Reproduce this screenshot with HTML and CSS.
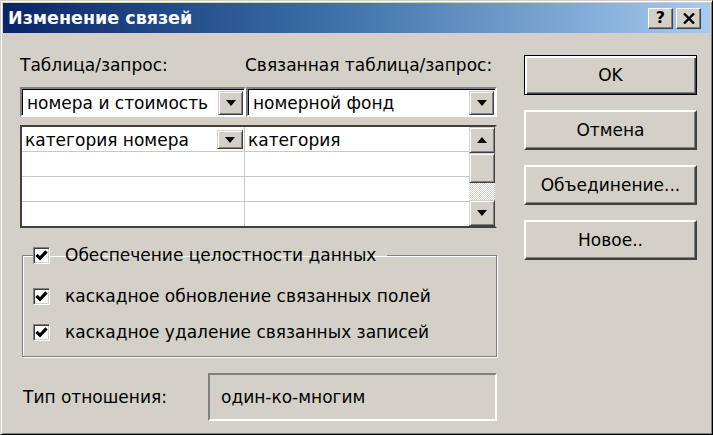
FILE: index.html
```html
<!DOCTYPE html>
<html lang="ru">
<head>
<meta charset="utf-8">
<title>Изменение связей</title>
<link rel="stylesheet" href="styles.css">
</head>
<body>
<div class="window">
  <div class="titlebar">
    <span class="title">Изменение связей</span>
    <div class="tb-buttons">
      <div class="tb-btn help">?</div>
      <div class="tb-btn close">
        <svg width="12" height="11" viewBox="0 0 12 11"><path d="M1 0.5 L11 10.5 M11 0.5 L1 10.5" stroke="#000" stroke-width="2.4" fill="none"/></svg>
      </div>
    </div>
  </div>
  <div class="body">
    <div class="left">
      <div class="labels">
        <span class="lab-l">Таблица/запрос:</span>
        <span class="lab-r">Связанная таблица/запрос:</span>
      </div>
      <div class="combos">
        <div class="combo c1"><span class="val">номера и стоимость</span><span class="drop"><i class="arr-down"></i></span></div>
        <div class="combo c2"><span class="val">номерной фонд</span><span class="drop"><i class="arr-down"></i></span></div>
      </div>
      <div class="grid">
        <div class="cells">
          <div class="row first">
            <div class="cell cl">категория номера<span class="drop small"><i class="arr-down"></i></span></div>
            <div class="cell cr">категория</div>
          </div>
          <div class="row"><div class="cell cl"></div><div class="cell cr"></div></div>
          <div class="row"><div class="cell cl"></div><div class="cell cr"></div></div>
          <div class="row last"><div class="cell cl"></div><div class="cell cr"></div></div>
        </div>
        <div class="scrollbar">
          <div class="sb-btn"><i class="arr-up"></i></div>
          <div class="sb-thumb"></div>
          <div class="sb-track"></div>
          <div class="sb-btn"><i class="arr-down"></i></div>
        </div>
      </div>
      <fieldset class="group">
        <legend class="check"><span class="box"><svg width="13" height="13" viewBox="0 0 13 13"><path d="M1.5 5.8 L5 9.3 L11.5 2.3" stroke="#000" stroke-width="3.2" fill="none"/></svg></span><span class="ctext">Обеспечение целостности данных</span></legend>
        <div class="check"><span class="box"><svg width="13" height="13" viewBox="0 0 13 13"><path d="M1.5 5.8 L5 9.3 L11.5 2.3" stroke="#000" stroke-width="3.2" fill="none"/></svg></span><span class="ctext">каскадное обновление связанных полей</span></div>
        <div class="check"><span class="box"><svg width="13" height="13" viewBox="0 0 13 13"><path d="M1.5 5.8 L5 9.3 L11.5 2.3" stroke="#000" stroke-width="3.2" fill="none"/></svg></span><span class="ctext">каскадное удаление связанных записей</span></div>
      </fieldset>
      <div class="reltype">
        <span class="rel-label">Тип отношения:</span>
        <div class="relbox">один-ко-многим</div>
      </div>
    </div>
    <div class="right">
      <div class="btn default">OK</div>
      <div class="btn">Отмена</div>
      <div class="btn">Объединение...</div>
      <div class="btn">Новое..</div>
    </div>
  </div>
</div>
</body>
</html>
```
FILE: styles.css
```css
* { box-sizing: border-box; }
html, body { margin: 0; padding: 0; }
body {
  width: 713px;
  height: 435px;
  overflow: hidden;
  background: #d4d0c8;
  font-family: "DejaVu Sans", Verdana, sans-serif;
  font-size: 17px;
  color: #000;
}
.window {
  width: 713px;
  height: 435px;
  background: #d4d0c8;
  border: 1px solid;
  border-color: #d4d0c8 #000 #000 #d4d0c8;
  padding: 2px;
  box-shadow: inset 1px 1px 0 #fff, inset -1px -1px 0 #808080;
  display: flex;
  flex-direction: column;
}
.titlebar {
  height: 30px;
  flex: none;
  background: linear-gradient(to right, #0a246a 0%, #3a6ea5 45%, #a6caf0 100%);
  display: flex;
  align-items: center;
  justify-content: space-between;
  padding: 0 9px 0 5px;
}
.title {
  color: #fff;
  font-weight: bold;
  font-size: 17.5px;
}
.tb-buttons { display: flex; gap: 3px; }
.tb-btn {
  width: 25px;
  height: 21px;
  background: #d4d0c8;
  border: 1px solid;
  border-color: #fff #404040 #404040 #fff;
  box-shadow: inset -1px -1px 0 #808080;
  display: flex;
  align-items: center;
  justify-content: center;
  font-weight: bold;
  font-size: 16px;
  line-height: 1;
}
.body {
  flex: 1;
  display: flex;
  padding: 0 0 0 17px;
}
.left {
  width: 477px;
  display: flex;
  flex-direction: column;
  padding-top: 22px;
}
.labels {
  display: flex;
  height: 20px;
  align-items: center;
}
.lab-l { width: 225px; }
.combos {
  display: flex;
  margin-top: 12px;
}
.combo {
  height: 30px;
  background: #fff;
  border: 2px solid;
  border-color: #808080 #fff #fff #808080;
  box-shadow: inset 1px 1px 0 #000;
  display: flex;
  align-items: center;
  justify-content: space-between;
  padding: 2px 1px 1px 5px;
}
.c1 { width: 226px; }
.c2 { width: 251px; }
.val { white-space: nowrap; }
.drop {
  width: 25px;
  height: 24px;
  background: #d4d0c8;
  border: 1px solid;
  border-color: #d4d0c8 #404040 #404040 #d4d0c8;
  box-shadow: inset 1px 1px 0 #fff, inset -1px -1px 0 #808080;
  display: flex;
  align-items: center;
  justify-content: center;
  flex: none;
}
.drop.small {
  width: 26px;
  height: 19px;
}
.arr-down {
  width: 0; height: 0;
  border-left: 5px solid transparent;
  border-right: 5px solid transparent;
  border-top: 6px solid #000;
}
.arr-up {
  width: 0; height: 0;
  border-left: 5px solid transparent;
  border-right: 5px solid transparent;
  border-bottom: 6px solid #000;
}
.grid {
  margin-top: 8px;
  height: 103px;
  border: 2px solid;
  border-color: #404040 #d4d0c8 #404040 #404040;
  background: #fff;
  display: flex;
}
.cells { flex: 1; display: flex; flex-direction: column; }
.row {
  height: 25px;
  display: flex;
  border-bottom: 1px solid #c8c8c8;
}
.row.last { border-bottom: none; height: 24px; }
.cell { height: 100%; display: flex; align-items: center; }
.cl {
  width: 223px;
  border-right: 1px solid #c8c8c8;
  padding: 1px 1px 0 3px;
  justify-content: space-between;
}
.cr { flex: 1; padding: 1px 0 0 3px; }
.scrollbar {
  width: 26px;
  display: flex;
  flex-direction: column;
}
.sb-btn {
  height: 26px;
  background: #d4d0c8;
  border: 1px solid;
  border-color: #d4d0c8 #404040 #404040 #d4d0c8;
  box-shadow: inset 1px 1px 0 #fff, inset -1px -1px 0 #808080;
  display: flex;
  align-items: center;
  justify-content: center;
}
.sb-thumb {
  height: 30px;
  background: #d4d0c8;
  border: 1px solid;
  border-color: #d4d0c8 #404040 #404040 #d4d0c8;
  box-shadow: inset 1px 1px 0 #fff, inset -1px -1px 0 #808080;
}
.sb-track {
  flex: 1;
  background-color: #fff;
  background-image: repeating-conic-gradient(#d4d0c8 0 25%, #fff 0 50%);
  background-size: 2px 2px;
}
.group {
  margin: 18px 0 0 2px;
  padding: 0 0 15px 10px;
  border: 1px solid #808080;
  box-shadow: inset 1px 1px 0 #fff, 1px 1px 0 #fff;
  min-width: 0;
  width: 475px;
}
.group legend { padding: 0 11px 0 0; }
.check {
  display: flex;
  align-items: center;
  height: 18px;
}
.group > div.check:first-of-type { margin-top: 23px; }
.group > div.check + div.check { margin-top: 18px; }
.box {
  width: 17px;
  height: 17px;
  background: #fff;
  border: 1px solid;
  border-color: #808080 #fff #fff #808080;
  box-shadow: inset 1px 1px 0 #404040, inset -1px -1px 0 #d4d0c8;
  display: flex;
  align-items: center;
  justify-content: center;
  flex: none;
}
.ctext { margin-left: 15px; white-space: nowrap; }
.reltype {
  display: flex;
  align-items: center;
  margin-top: 16px;
}
.rel-label { width: 188px; padding-left: 3px; }
.relbox {
  width: 289px;
  height: 48px;
  border: 2px solid;
  border-color: #808080 #fff #fff #808080;
  display: flex;
  align-items: center;
  padding-left: 11px;
}
.right {
  width: 173px;
  margin-left: 27px;
  padding-top: 22px;
  display: flex;
  flex-direction: column;
  gap: 15px;
}
.btn {
  height: 40px;
  background: #d4d0c8;
  border: 2px solid;
  border-color: #fff #404040 #404040 #fff;
  box-shadow: inset -1px -1px 0 #808080;
  display: flex;
  align-items: center;
  justify-content: center;
  white-space: nowrap;
}
.btn.default {
  border: 1px solid #000;
  box-shadow: inset 1px 1px 0 #fff, inset 2px 2px 0 #fff, inset -1px -1px 0 #404040, inset -2px -2px 0 #808080;
}
```
